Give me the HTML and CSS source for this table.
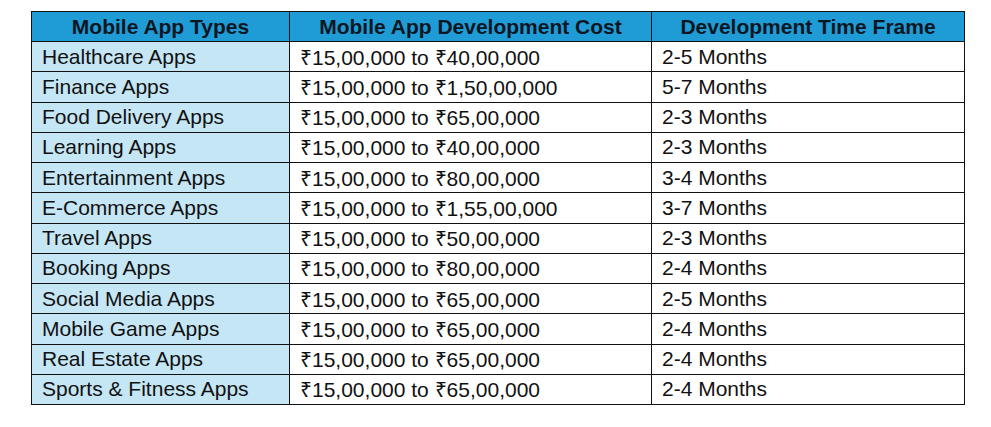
FILE: index.html
```html
<!DOCTYPE html>
<html>
<head>
<meta charset="utf-8">
<link rel="stylesheet" href="styles.css">
</head>
<body>
<div class="page">
<table class="cost-table">
<colgroup><col class="c1"><col class="c2"><col class="c3"></colgroup>
<thead>
<tr><th>Mobile App Types</th><th>Mobile App Development Cost</th><th>Development Time Frame</th></tr>
</thead>
<tbody>
<tr><td class="type">Healthcare Apps</td><td>₹15,00,000 to ₹40,00,000</td><td>2-5 Months</td></tr>
<tr><td class="type">Finance Apps</td><td>₹15,00,000 to ₹1,50,00,000</td><td>5-7 Months</td></tr>
<tr><td class="type">Food Delivery Apps</td><td>₹15,00,000 to ₹65,00,000</td><td>2-3 Months</td></tr>
<tr><td class="type">Learning Apps</td><td>₹15,00,000 to ₹40,00,000</td><td>2-3 Months</td></tr>
<tr><td class="type">Entertainment Apps</td><td>₹15,00,000 to ₹80,00,000</td><td>3-4 Months</td></tr>
<tr><td class="type">E-Commerce Apps</td><td>₹15,00,000 to ₹1,55,00,000</td><td>3-7 Months</td></tr>
<tr><td class="type">Travel Apps</td><td>₹15,00,000 to ₹50,00,000</td><td>2-3 Months</td></tr>
<tr><td class="type">Booking Apps</td><td>₹15,00,000 to ₹80,00,000</td><td>2-4 Months</td></tr>
<tr><td class="type">Social Media Apps</td><td>₹15,00,000 to ₹65,00,000</td><td>2-5 Months</td></tr>
<tr><td class="type">Mobile Game Apps</td><td>₹15,00,000 to ₹65,00,000</td><td>2-4 Months</td></tr>
<tr><td class="type">Real Estate Apps</td><td>₹15,00,000 to ₹65,00,000</td><td>2-4 Months</td></tr>
<tr><td class="type">Sports &amp; Fitness Apps</td><td>₹15,00,000 to ₹65,00,000</td><td>2-4 Months</td></tr>
</tbody>
</table>
</div>
</body>
</html>
```
FILE: styles.css
```css
html, body {
  margin: 0;
  padding: 0;
  background: #ffffff;
}
.page {
  padding: 11px 0 0 31px;
}
.cost-table {
  border-collapse: collapse;
  width: 933px;
  table-layout: fixed;
  font-family: "Liberation Sans", Arial, sans-serif;
  color: #111111;
}
.cost-table th,
.cost-table td {
  border: 1px solid #111111;
  padding: 0 0 0 10px;
  text-align: left;
  white-space: nowrap;
}
.cost-table th {
  background: #1f9cd6;
  color: #0b1622;
  font-size: 21px;
  font-weight: bold;
  text-align: center;
  padding: 0;
  height: 29px;
}
.cost-table td {
  font-size: 21px;
  height: 29.25px;
}
.cost-table td.type {
  background: #c5e6f5;
}
.c1 { width: 258px; }
.c2 { width: 362px; }
.c3 { width: 313px; }
```
